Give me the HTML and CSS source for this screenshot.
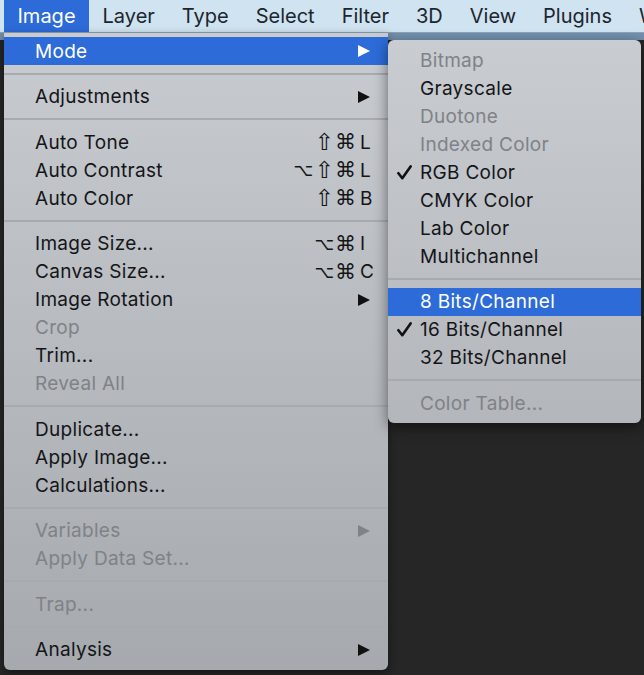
FILE: index.html
```html
<!DOCTYPE html>
<html>
<head>
<meta charset="utf-8">
<link rel="stylesheet" href="styles.css">
</head>
<body>
<div class="screen">
  <nav class="menubar">
    <span class="mb-item active">Image</span>
    <span class="mb-item">Layer</span>
    <span class="mb-item">Type</span>
    <span class="mb-item">Select</span>
    <span class="mb-item">Filter</span>
    <span class="mb-item">3D</span>
    <span class="mb-item">View</span>
    <span class="mb-item">Plugins</span>
    <span class="mb-item">Window</span>
  </nav>
  <div class="band"></div>

  <div class="menu main">
    <div class="item hl"><span class="label">Mode</span><svg class="arrow" viewBox="0 0 12 12"><polygon points="0,0 12,6 0,12"/></svg></div>
    <div class="sep"></div>
    <div class="item"><span class="label">Adjustments</span><svg class="arrow" viewBox="0 0 12 12"><polygon points="0,0 12,6 0,12"/></svg></div>
    <div class="sep"></div>
    <div class="item"><span class="label">Auto Tone</span><span class="sc"><span class="mod shift">⇧</span><span class="mod">⌘</span><span class="key">L</span></span></div>
    <div class="item"><span class="label">Auto Contrast</span><span class="sc"><span class="mod opt">⌥</span><span class="mod shift">⇧</span><span class="mod">⌘</span><span class="key">L</span></span></div>
    <div class="item"><span class="label">Auto Color</span><span class="sc"><span class="mod shift">⇧</span><span class="mod">⌘</span><span class="key">B</span></span></div>
    <div class="sep"></div>
    <div class="item"><span class="label">Image Size...</span><span class="sc"><span class="mod opt">⌥</span><span class="mod">⌘</span><span class="key">I</span></span></div>
    <div class="item"><span class="label">Canvas Size...</span><span class="sc"><span class="mod opt">⌥</span><span class="mod">⌘</span><span class="key">C</span></span></div>
    <div class="item"><span class="label">Image Rotation</span><svg class="arrow" viewBox="0 0 12 12"><polygon points="0,0 12,6 0,12"/></svg></div>
    <div class="item off"><span class="label">Crop</span></div>
    <div class="item"><span class="label">Trim...</span></div>
    <div class="item off"><span class="label">Reveal All</span></div>
    <div class="sep"></div>
    <div class="item"><span class="label">Duplicate...</span></div>
    <div class="item"><span class="label">Apply Image...</span></div>
    <div class="item"><span class="label">Calculations...</span></div>
    <div class="sep"></div>
    <div class="item off"><span class="label">Variables</span><svg class="arrow" viewBox="0 0 12 12"><polygon points="0,0 12,6 0,12"/></svg></div>
    <div class="item off"><span class="label">Apply Data Set...</span></div>
    <div class="sep"></div>
    <div class="item off"><span class="label">Trap...</span></div>
    <div class="sep"></div>
    <div class="item"><span class="label">Analysis</span><svg class="arrow" viewBox="0 0 12 12"><polygon points="0,0 12,6 0,12"/></svg></div>
  </div>

  <div class="menu sub">
    <div class="item off"><span class="chk"></span><span class="label">Bitmap</span></div>
    <div class="item"><span class="chk"></span><span class="label">Grayscale</span></div>
    <div class="item off"><span class="chk"></span><span class="label">Duotone</span></div>
    <div class="item off"><span class="chk"></span><span class="label">Indexed Color</span></div>
    <div class="item"><span class="chk"><svg viewBox="0 0 15 15"><polyline points="1.4,8.2 5.3,13.2 13.6,1.4"/></svg></span><span class="label">RGB Color</span></div>
    <div class="item"><span class="chk"></span><span class="label">CMYK Color</span></div>
    <div class="item"><span class="chk"></span><span class="label">Lab Color</span></div>
    <div class="item"><span class="chk"></span><span class="label">Multichannel</span></div>
    <div class="sep"></div>
    <div class="item hl"><span class="chk"></span><span class="label">8 Bits/Channel</span></div>
    <div class="item"><span class="chk"><svg viewBox="0 0 15 15"><polyline points="1.4,8.2 5.3,13.2 13.6,1.4"/></svg></span><span class="label">16 Bits/Channel</span></div>
    <div class="item"><span class="chk"></span><span class="label">32 Bits/Channel</span></div>
    <div class="sep"></div>
    <div class="item off"><span class="chk"></span><span class="label">Color Table...</span></div>
  </div>
</div>
</body>
</html>
```

FILE: styles.css
```css
html, body {
  margin: 0;
  padding: 0;
  background: #262626;
}

.screen {
  position: relative;
  width: 644px;
  height: 675px;
  overflow: hidden;
  background: #262626;
  font-family: Inter, "Liberation Sans", sans-serif;
}

.menubar {
  display: flex;
  height: 32px;
  padding-left: 4px;
  background: #cfe3f0;
  border-bottom: 1px solid #8ea3b5;
  white-space: nowrap;
}

.mb-item {
  padding: 0 13.5px;
  line-height: 32px;
  font-size: 20px;
  color: #1c252d;
}

.mb-item.active {
  background: #2d6bd8;
  color: #fff;
}

.band {
  height: 7px;
  background: #7390ae;
}

.menu {
  position: absolute;
  box-sizing: border-box;
  font-size: 19px;
  letter-spacing: 0.3px;
  color: #141517;
}

.main {
  left: 4px;
  top: 33px;
  width: 384px;
  height: 637px;
  padding-top: 4px;
  background: linear-gradient(#c8cbd0, #a6a9ae);
  border-radius: 0 0 6px 6px;
  box-shadow: 0 3px 10px rgba(0, 0, 0, 0.45);
}

.sub {
  left: 388px;
  top: 40px;
  width: 253px;
  height: 383px;
  padding-top: 6px;
  background: linear-gradient(#c9ccd1, #b3b6bb);
  border-radius: 6px;
  box-shadow: 0 4px 14px rgba(0, 0, 0, 0.5);
}

.item {
  display: flex;
  align-items: center;
  height: 28px;
  padding: 0 15px 0 31px;
  white-space: nowrap;
}

.sub .item {
  padding-left: 9px;
}

.item.hl {
  background: #2d6bd8;
  color: #fff;
}

.item.off {
  color: #7f8287;
}

.label {
  flex: 1;
}

.sep {
  height: 17.5px;
  display: flex;
  align-items: center;
}

.sep::before {
  content: "";
  display: block;
  width: 100%;
  height: 2px;
  background: #a7aaaf;
}

.arrow {
  width: 12px;
  height: 12px;
  margin-right: 3px;
  fill: #111;
}

.hl .arrow {
  fill: #fff;
}

.off .arrow {
  fill: #7f8287;
}

.sc {
  display: flex;
  align-items: center;
  font-family: "DejaVu Sans", sans-serif;
  letter-spacing: 0;
}

.mod {
  display: inline-block;
  width: 21px;
  text-align: center;
  font-size: 21px;
  line-height: 28px;
}

.mod.shift {
  font-size: 23px;
}

.mod.opt {
  font-size: 17px;
}

.key {
  display: inline-block;
  width: 13px;
  margin-left: 4px;
  font-family: Inter, "Liberation Sans", sans-serif;
  font-size: 19px;
}

.chk {
  flex: none;
  width: 23px;
  height: 15px;
  display: flex;
  align-items: center;
}

.chk svg {
  width: 15px;
  height: 15px;
  fill: none;
  stroke: #111;
  stroke-width: 2.6;
  stroke-linecap: round;
  stroke-linejoin: round;
}
```
